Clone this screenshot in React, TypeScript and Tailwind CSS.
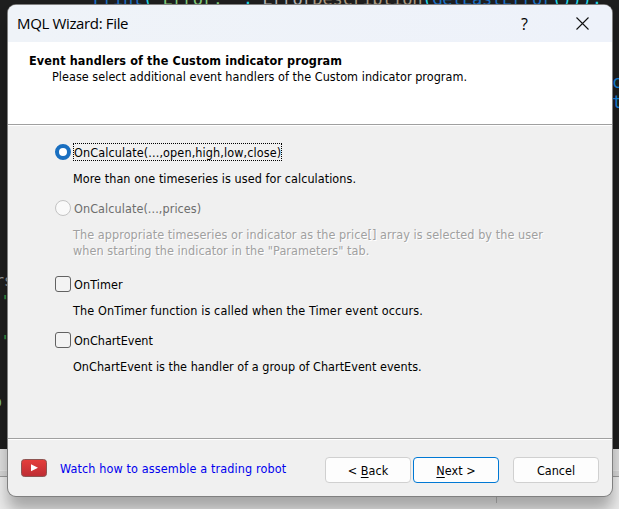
import type { ReactNode } from "react";

const UI = "font-['DejaVu_Sans_Condensed','DejaVu_Sans',sans-serif] [font-stretch:condensed]";

function Backdrop() {
  return (
    <div className="absolute inset-0 flex flex-col font-['DejaVu_Sans_Mono',monospace] text-[17px] whitespace-pre">
      <div className="relative h-[449px] shrink-0 bg-[#1e1e1e]">
        <div className="absolute top-[-9px] left-[93px] leading-[17px] tracking-[-0.26px] text-[#1a6fc4]">
          Print<span className="text-[#1fd8e8]">(</span><span className="text-[#80c878]">"Error: "</span><span className="text-[#1fd8e8]">, </span>
          <span className="text-[#b0b0b0]">Error</span><span className="text-[#a89880]">Description</span><span className="text-[#1fd8e8]">(</span>GetLastError<span className="text-[#1fd8e8]">()));</span>
        </div>
        <div className="absolute top-[72px] left-[612px] leading-5 text-[#1683dc]">{"c\nt"}</div>
        <div className="absolute top-[271px] left-[-5px] text-[15px] leading-5 text-[#999]">rs</div>
        <div className="absolute top-[292px] left-[-7px] text-[15px] leading-5 text-[#35a84c]">("</div>
        <div className="absolute top-[332px] left-[-7px] text-[15px] leading-5 text-[#35a84c]">("</div>
        <div className="absolute top-[392px] left-[-7px] text-[15px] leading-5 text-[#73b882]">o</div>
      </div>
      <div className="h-[22px] shrink-0 border-b border-[#e4e4e4] bg-[#dedede]" />
      <div className="h-[6px] shrink-0 border-b border-[#999] bg-[#d6d6d6]" />
      <div className="grow bg-[#ececec]">
        <div className="ml-[496px] h-[26px] w-px bg-[#bdbdbd]" />
      </div>
    </div>
  );
}

function Radio({ checked = false }: { checked?: boolean }) {
  return checked ? (
    <span className="size-4 shrink-0 rounded-full border-[4px] border-[#1a6fc0] bg-white" />
  ) : (
    <span className="size-4 shrink-0 rounded-full border border-[#c3c3c3] bg-[#f9f9f9]" />
  );
}

function Check() {
  return <span className="size-4 shrink-0 rounded-[3px] border border-[#626262] bg-[#f3f3f3]" />;
}

function Option({ control, label, children }: { control: ReactNode; label: ReactNode; children: ReactNode }) {
  return (
    <div className="flex flex-col">
      <div className="flex h-4 items-center gap-[2px]">
        {control}
        {label}
      </div>
      <div className="mt-[11px] -mb-px pl-[18px] leading-4">{children}</div>
    </div>
  );
}

function Button({ children, primary = false }: { children: ReactNode; primary?: boolean }) {
  return (
    <button
      className={`flex h-[26px] w-[86px] items-center justify-center rounded-[4px] border bg-[#fdfdfd] pt-[2px] tracking-[0.02px] whitespace-pre ${
        primary ? "border-[#0078d4]" : "border-[#d0d0d0]"
      }`}
    >
      {children}
    </button>
  );
}

export default function App() {
  return (
    <div className={`relative h-[509px] w-[619px] overflow-hidden text-[12.5px] tracking-[0.08px] whitespace-nowrap text-black ${UI}`}>
      <Backdrop />
      <div className="absolute top-[5px] left-[8px] flex h-[491px] w-[604px] flex-col overflow-hidden rounded-[8px] bg-[#f0f0f0] shadow-[0_0_0_1px_#808080,0_14px_16px_0_rgba(0,0,0,0.3)]">
        <header className="flex h-[37px] shrink-0 items-center bg-gradient-to-r from-[#eff3f8] to-[#eef2fa] pr-[23px] pl-[9px] font-['Open_Sans',sans-serif] text-[15px] [font-stretch:normal]">
          <span className="tracking-[-0.35px]">MQL Wizard: File</span>
          <span className="mr-[48px] ml-auto text-[16px]">?</span>
          <svg className="size-[13px]" viewBox="0 0 13 13" fill="none" stroke="#111" strokeWidth="1.1">
            <path d="M.5.5l12 12M12.500.5l-12 12" />
          </svg>
        </header>
        <section className="flex h-[83px] shrink-0 flex-col border-b border-[#a0a0a0] bg-white pt-[11px] pl-[21px] leading-4">
          <h1 className="font-bold tracking-[0.13px]">Event handlers of the Custom indicator program</h1>
          <p className="pl-[23px] tracking-[0.04px]">Please select additional event handlers of the Custom indicator program.</p>
        </section>
        <main className="flex h-[314px] shrink-0 flex-col gap-[14px] border-t border-b border-t-white border-b-[#a0a0a0] pt-[18px] pl-[47px]">
          <Option
            control={<Radio checked />}
            label={<span className="flex h-[18px] w-[209px] items-center border border-dotted border-black pt-[2px] leading-4 tracking-[0.12px]">OnCalculate(...,open,high,low,close)</span>}
          >
            <span className="tracking-[0.06px]">More than one timeseries is used for calculations.</span>
          </Option>
          <div className="[&>div>div:last-child]:text-[#a0a0a0] [&>div>div:last-child]:[text-shadow:1px_1px_0_white]">
            <Option control={<Radio />} label={<span className="pt-[2px] pl-px text-[#6d6d6d]">OnCalculate(...,prices)</span>}>
              <p>The appropriate timeseries or indicator as the price[] array is selected by the user</p>
              <p>when starting the indicator in the "Parameters" tab.</p>
            </Option>
          </div>
          <div className="mt-[4px]">
            <Option control={<Check />} label={<span className="pt-[2px] pl-px">OnTimer</span>}>
              <span className="tracking-[0.12px]">The OnTimer function is called when the Timer event occurs.</span>
            </Option>
          </div>
          <Option control={<Check />} label={<span className="pt-[2px] pl-px tracking-[-0.02px]">OnChartEvent</span>}>
            <span className="tracking-[0.02px]">OnChartEvent is the handler of a group of ChartEvent events.</span>
          </Option>
        </main>
        <footer className="flex grow items-start border-t border-white pt-[17px] pr-[13px] pl-[13px]">
          <svg className="mt-[2px] h-[18px] w-[26px]" viewBox="0 0 26 18">
            <defs>
              <linearGradient id="play" x2="0" y2="1">
                <stop stopColor="#e63e3b" />
                <stop offset="1" stopColor="#bd2c33" />
              </linearGradient>
            </defs>
            <rect x=".5" y=".5" width="25" height="17" rx="3" fill="url(#play)" stroke="#8d5552" />
            <path d="M10 5.300v7l7-3.500z" fill="#fff" />
          </svg>
          <a className="mt-[4px] ml-[13px] leading-4 tracking-[0.13px] text-[#0000ee]">Watch how to assemble a trading robot</a>
          <div className="ml-auto flex gap-[2px]">
            <Button>
              {"< "}
              <span className="underline underline-offset-2">B</span>ack
            </Button>
            <Button primary>
              <span className="underline underline-offset-2">N</span>
              {"ext >"}
            </Button>
            <div className="ml-[12px]">
              <Button>Cancel</Button>
            </div>
          </div>
        </footer>
      </div>
    </div>
  );
}
